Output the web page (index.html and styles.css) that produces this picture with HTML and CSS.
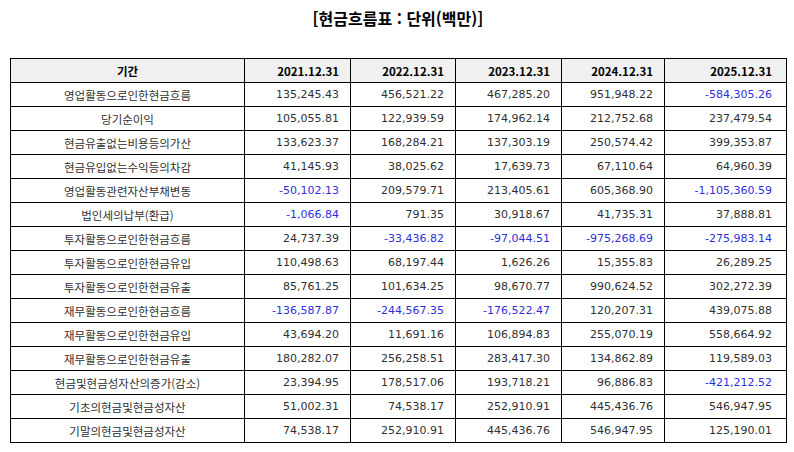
FILE: index.html
```html
<!DOCTYPE html>
<html lang="ko">
<head>
<meta charset="utf-8">
<title>현금흐름표</title>
<link rel="stylesheet" href="styles.css">
</head>
<body>
<div class="page">
  <h1 class="title">[현금흐름표 : 단위(백만)]</h1>
  <table class="cf">
    <colgroup>
      <col class="c-label"><col class="c-2021"><col class="c-2022"><col class="c-2023"><col class="c-2024"><col class="c-2025">
    </colgroup>
    <thead>
      <tr><th class="lbl">기간</th><th>2021.12.31</th><th>2022.12.31</th><th>2023.12.31</th><th>2024.12.31</th><th>2025.12.31</th></tr>
    </thead>
    <tbody>
      <tr><td class="lbl">영업활동으로인한현금흐름</td><td>135,245.43</td><td>456,521.22</td><td>467,285.20</td><td>951,948.22</td><td class="neg">-584,305.26</td></tr>
      <tr><td class="lbl">당기순이익</td><td>105,055.81</td><td>122,939.59</td><td>174,962.14</td><td>212,752.68</td><td>237,479.54</td></tr>
      <tr><td class="lbl">현금유출없는비용등의가산</td><td>133,623.37</td><td>168,284.21</td><td>137,303.19</td><td>250,574.42</td><td>399,353.87</td></tr>
      <tr><td class="lbl">현금유입없는수익등의차감</td><td>41,145.93</td><td>38,025.62</td><td>17,639.73</td><td>67,110.64</td><td>64,960.39</td></tr>
      <tr><td class="lbl">영업활동관련자산부채변동</td><td class="neg">-50,102.13</td><td>209,579.71</td><td>213,405.61</td><td>605,368.90</td><td class="neg">-1,105,360.59</td></tr>
      <tr><td class="lbl">법인세의납부(환급)</td><td class="neg">-1,066.84</td><td>791.35</td><td>30,918.67</td><td>41,735.31</td><td>37,888.81</td></tr>
      <tr><td class="lbl">투자활동으로인한현금흐름</td><td>24,737.39</td><td class="neg">-33,436.82</td><td class="neg">-97,044.51</td><td class="neg">-975,268.69</td><td class="neg">-275,983.14</td></tr>
      <tr><td class="lbl">투자활동으로인한현금유입</td><td>110,498.63</td><td>68,197.44</td><td>1,626.26</td><td>15,355.83</td><td>26,289.25</td></tr>
      <tr><td class="lbl">투자활동으로인한현금유출</td><td>85,761.25</td><td>101,634.25</td><td>98,670.77</td><td>990,624.52</td><td>302,272.39</td></tr>
      <tr><td class="lbl">재무활동으로인한현금흐름</td><td class="neg">-136,587.87</td><td class="neg">-244,567.35</td><td class="neg">-176,522.47</td><td>120,207.31</td><td>439,075.88</td></tr>
      <tr><td class="lbl">재무활동으로인한현금유입</td><td>43,694.20</td><td>11,691.16</td><td>106,894.83</td><td>255,070.19</td><td>558,664.92</td></tr>
      <tr><td class="lbl">재무활동으로인한현금유출</td><td>180,282.07</td><td>256,258.51</td><td>283,417.30</td><td>134,862.89</td><td>119,589.03</td></tr>
      <tr><td class="lbl">현금및현금성자산의증가(감소)</td><td>23,394.95</td><td>178,517.06</td><td>193,718.21</td><td>96,886.83</td><td class="neg">-421,212.52</td></tr>
      <tr><td class="lbl">기초의현금및현금성자산</td><td>51,002.31</td><td>74,538.17</td><td>252,910.91</td><td>445,436.76</td><td>546,947.95</td></tr>
      <tr><td class="lbl">기말의현금및현금성자산</td><td>74,538.17</td><td>252,910.91</td><td>445,436.76</td><td>546,947.95</td><td>125,190.01</td></tr>
    </tbody>
  </table>
</div>
</body>
</html>
```
FILE: styles.css
```css
html, body {
  margin: 0;
  padding: 0;
  background: #ffffff;
}
body {
  font-family: "Noto Sans CJK KR", "Noto Sans", sans-serif;
  color: #111111;
}
.page {
  padding: 0 8px 0 10px;
}
.title {
  margin: 0;
  height: 58px;
  box-sizing: border-box;
  padding-top: 6px;
  font-size: 16px;
  line-height: 24px;
  font-weight: 700;
  text-align: center;
  color: #000000;
}
.cf {
  border-collapse: collapse;
  table-layout: fixed;
  width: 776px;
  font-size: 11.5px;
}
.c-label { width: 234px; }
.c-2021 { width: 106px; }
.c-2022 { width: 105px; }
.c-2023 { width: 106px; }
.c-2024 { width: 103px; }
.c-2025 { width: 122px; }
.cf th, .cf td {
  border: 1px solid #000000;
  height: 23px;
  padding: 0 11px 0 4px;
  text-align: right;
  line-height: 16px;
  white-space: nowrap;
  color: #222222;
}
.cf th:last-child, .cf td:last-child {
  padding-right: 14px;
}
.cf td {
  font-family: "DejaVu Sans", "Noto Sans CJK KR", sans-serif;
  font-size: 11px;
  color: #303030;
}
.cf th {
  background: #f0f0f0;
  font-weight: 700;
  color: #000000;
}
.cf .lbl {
  text-align: center;
  padding: 0 4px;
}
.cf td.lbl {
  font-family: "Noto Sans CJK KR", "Noto Sans", sans-serif;
  font-size: 11.5px;
}
.cf .neg {
  color: #2f2fd8;
}
```
